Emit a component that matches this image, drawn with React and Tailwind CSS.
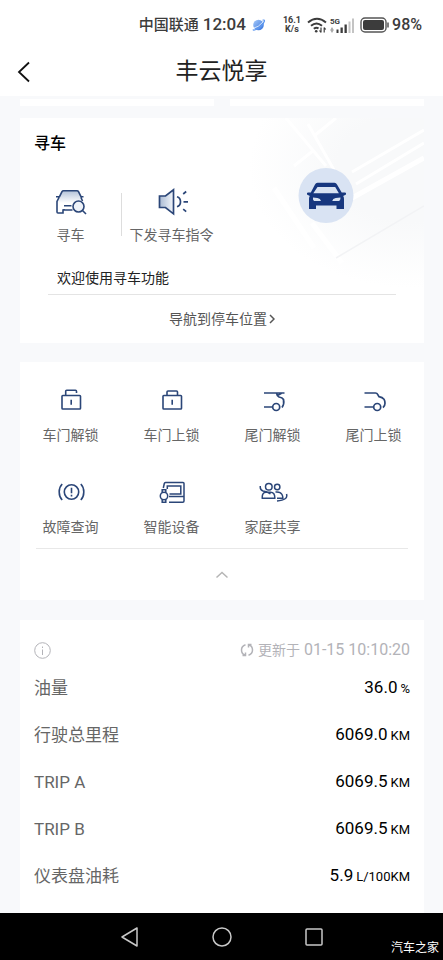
import React, { useState } from 'react';

const NAVY = '#2b4678';

function FindCarIcon() {
  return (
    <svg width="32" height="30" viewBox="0 0 32 30" fill="none" stroke={NAVY} strokeWidth="1.6">
      <defs>
        <linearGradient id="carFill" x1="0" y1="0" x2="0" y2="1">
          <stop offset="0" stopColor="#b4c3d9" />
          <stop offset="1" stopColor="#ffffff" />
        </linearGradient>
      </defs>
      <path d="M4 11 7.500 4h15.500l3.500 7 1 5H2.500z" fill="url(#carFill)" stroke="none" />
      <path d="M1 9.700h3.500L7 4.700q.5-1 1.500-1h13.500q1 0 1.500 1L26 9.700h2.500M4 10.500l-2 4V25q0 1 1 1h5v-3h9.500M26 10.500l1.500 3.500M9 18.700h7.500M9 23v-1" />
      <circle cx="23.500" cy="19.500" r="5.500" fill="#eef2f8" />
      <path d="m27.500 23.500 3.500 3.500" />
    </svg>
  );
}

function HornIcon() {
  return (
    <svg width="32" height="30" viewBox="0 0 32 30" fill="none" stroke={NAVY} strokeWidth="1.7">
      <defs>
        <linearGradient id="hornFill" x1="0" y1="0" x2="1" y2="0">
          <stop offset="0" stopColor="#a9bad3" />
          <stop offset="1" stopColor="#f4f7fb" />
        </linearGradient>
      </defs>
      <path d="M3.500 9H9.500L17.500 2.800v24L9.500 20.500h-6z" fill="url(#hornFill)" />
      <path d="M21 9.800q3.500 1 3.500 5t-3.500 5M27.200 7l3-2.500M27.500 14.800H32M27.200 22.200l3 2.500" />
    </svg>
  );
}

function LockIcon({ open }) {
  return (
    <svg width="28" height="28" viewBox="0 0 28 28" fill="none" stroke={NAVY} strokeWidth="1.600">
      <rect x="5" y="9.500" width="18.500" height="13.500" rx="0.800" />
      <path d={open ? 'M8.700 9.500V5.200q0-1 1-1h8.800q1 0 1 1V7' : 'M9 9.500V6q0-1 1-1h8.500q1 0 1 1v3.500'} />
      <path d="M14.200 13.800v5" />
    </svg>
  );
}

function TailgateIcon({ open }) {
  return (
    <svg width="28" height="28" viewBox="0 0 28 28" fill="none" stroke={NAVY} strokeWidth="1.700">
      {open ? (
        <path d="M5 7h20.500M17.500 7q.5 3 2.500 4 3.500.5 4.500 2.500 1 4.500-1.500 8M18.500 9.500l4-2.300M5 21h8" />
      ) : (
        <path d="M4.500 7h11q1.500 0 2 1.200l1.500 2.500q3.500.8 5 2.500 1 2 1 4 0 2.500-2 4.500M4.500 21h9" />
      )}
      <circle cx="17.200" cy="21" r="3.500" />
    </svg>
  );
}

function FaultIcon() {
  return (
    <svg width="28" height="28" viewBox="0 0 28 28" fill="none" stroke={NAVY} strokeWidth="1.600">
      <circle cx="14.500" cy="14" r="7.200" />
      <path d="M14.500 9.800v5.500M14.500 16.700v1.800M5.200 6Q2.200 9 2.200 14t3 8M23.800 6q3 3 3 8t-3 8" />
    </svg>
  );
}

function DeviceIcon() {
  return (
    <svg width="28" height="28" viewBox="0 0 28 28" fill="none" stroke={NAVY} strokeWidth="1.500">
      <path d="M5.300 10 6.300 5.500q.2-1 1.200-1h17.500q1 0 1 1v17.500q0 1.200-1.200 1.200H11M9.300 11V8h13.500v8H11.500M11 18.500h15" />
      <circle cx="6" cy="18" r="3.700" fill="#ffffff" />
      <path d="M4.200 14.500V11.800h3.600v2.700M4.200 21.500v2.700h3.600v-2.700" />
    </svg>
  );
}

function FamilyIcon() {
  return (
    <svg width="30" height="28" viewBox="0 0 30 28" fill="none" stroke={NAVY} strokeWidth="1.500">
      <circle cx="10.800" cy="8.800" r="3.300" />
      <circle cx="19.200" cy="9" r="2.700" />
      <path d="M4.300 20.300q-.5-6 3.700-6h4.500q4.500 0 4.300 6zM2.300 8q-.5 4 2.700 5 4.500.5 7.500 3M17.500 14q5-.5 6.500 2.500 1 2 .8 3.800H19M28.500 16q2 6-9.500 7" />
    </svg>
  );
}

function MapPreview() {
  return (
    <svg className="absolute right-0 top-0" width="180" height="172" viewBox="0 0 180 172" fill="none">
      <defs>
        <radialGradient id="mapFade" gradientUnits="userSpaceOnUse" cx="165" cy="50" r="160" gradientTransform="matrix(1 0 0 0.75 0 12)">
          <stop offset="0.45" stopColor="#f8f9fa" />
          <stop offset="1" stopColor="#f8f9fa" stopOpacity="0" />
        </radialGradient>
      </defs>
      <path d="M0 0h180v172H0z" fill="url(#mapFade)" />
      <g stroke="#ffffff">
        <path d="m42 0 40 48M50 48 70 32M70 18 92 0M64 6l26 46M180 12 108 54M180 25 112 66" strokeWidth="3" />
        <path d="M180 40 108 80M68 105l30 40M30 70l40 60" strokeWidth="5" />
      </g>
      <path d="M180 88 92 140" stroke="#f2f3f5" strokeWidth="1.500" />
      <circle cx="82" cy="77.500" r="27.500" fill="#d9e3f3" />
      <path
        fill="#17377f"
        fillRule="evenodd"
        d="M71 66.500q.8-1.700 2.500-1.700h17q1.700 0 2.500 1.700l4.700 8h3.300q1.500 0 1 2l-2.800 1.500q.8 1 .8 3V91h-7.500v-3.500H72V91h-7V81q0-2 .8-3L63 76.500q-.5-2 1-2h2.800zM73.500 69l-4.200 6.200h25.600L91.200 69zM69 79.500q-.5 2 1 3.500h7q-.5-2.500-3.500-3zM96.500 79.500l-4.800.5q-3 .5-3.500 3h7q1.500-1.500 1.300-3.500z"
      />
    </svg>
  );
}

function StatusBar() {
  return (
    <div className="flex h-[50px] items-center justify-end pr-[21px] text-[#3c3c3c]">
      <span className="text-[15px] font-medium">中国联通</span>
      <span className="ml-1 text-[17px] font-medium">12:04</span>
      <svg className="ml-1.5" width="14" height="14" viewBox="0 0 14 14">
        <defs>
          <linearGradient id="planet" x1="0" y1="0" x2="1" y2="1">
            <stop offset="0" stopColor="#a8cbfa" />
            <stop offset="1" stopColor="#2f6fdc" />
          </linearGradient>
        </defs>
        <circle cx="6.500" cy="7" r="5.300" fill="url(#planet)" />
        <path d="M1 11.500q.5 1.500 5-1T12.500 3q0-1.500-2-.8" fill="none" stroke="#5d97ef" strokeWidth="1.200" />
        <path d="M2 10q4-.5 9-6" fill="none" stroke="#d5e6fd" strokeWidth="1" />
      </svg>
      <span className="ml-[17px] text-center text-[9px] leading-[9px] font-bold">
        16.1
        <br />
        K/s
      </span>
      <svg className="ml-1.5" width="20" height="18" viewBox="0 0 20 18" fill="none" stroke="#3c3c3c" strokeWidth="2">
        <path d="M1 6.500q9-7.500 18 0M4 9.800q5.500-4.500 11 0M6.800 12.800q2.700-2 4.700-.3" />
        <circle cx="9.200" cy="15.200" r="1.300" fill="#3c3c3c" stroke="none" />
        <path d="M14 11.500v5M17.200 11.500v5M12.500 14.500l1.500 2M17.200 11.500l1.500 2" strokeWidth="1.200" />
      </svg>
      <span className="ml-[3px] flex items-end">
        <span className="-mr-2.5 self-start text-[8px] leading-[9px] font-bold">5G</span>
        <svg width="24" height="17" viewBox="0 0 24 17" fill="#3c3c3c">
          <path d="M6.500 12.500h2V16h-2zM10.500 10.500h2.300V16h-2.300zM14.500 7.500h2.300V16h-2.300z" />
          <path d="m2 10 1.800 3L2 16 .2 13z" fill="#aaaaaa" />
          <path d="M18.500 4.500h2V16h-2zM22 1.500h2V16h-2z" fill="#c4c4c4" />
        </svg>
      </span>
      <svg className="ml-1.5" width="30" height="16" viewBox="0 0 30 16" fill="none">
        <rect x="1" y="1" width="25" height="14" rx="4" stroke="#555555" strokeWidth="1.400" />
        <rect x="3" y="3" width="21" height="10" rx="2" fill="#3c3c3c" />
        <path d="M28 5.500v5" stroke="#555555" strokeWidth="1.500" />
      </svg>
      <span className="ml-0.5 text-[16px] font-medium">98%</span>
    </div>
  );
}

const ACTIONS = [
  { label: '车门解锁', icon: <LockIcon open /> },
  { label: '车门上锁', icon: <LockIcon /> },
  { label: '尾门解锁', icon: <TailgateIcon open /> },
  { label: '尾门上锁', icon: <TailgateIcon /> },
  { label: '故障查询', icon: <FaultIcon /> },
  { label: '智能设备', icon: <DeviceIcon /> },
  { label: '家庭共享', icon: <FamilyIcon /> },
];

const STATS = [
  { label: '油量', value: '36.0', unit: '%' },
  { label: '行驶总里程', value: '6069.0', unit: 'KM' },
  { label: 'TRIP A', value: '6069.5', unit: 'KM' },
  { label: 'TRIP B', value: '6069.5', unit: 'KM' },
  { label: '仪表盘油耗', value: '5.9', unit: 'L/100KM' },
];

export default function App() {
  const [expanded, setExpanded] = useState(true);
  const actions = expanded ? ACTIONS : ACTIONS.slice(0, 4);

  return (
    <div className="flex min-h-screen flex-col bg-[#f8f9fb] font-['Roboto','Noto_Sans_CJK_SC',sans-serif] text-black">
      <header className="bg-white">
        <StatusBar />
        <div className="grid h-[46px] grid-cols-[1fr_auto_1fr] items-center pb-0.5">
          <button aria-label="返回" className="ml-4 justify-self-start">
            <svg width="16" height="22" viewBox="0 0 16 22" fill="none" stroke="#111111" strokeWidth="1.800">
              <path d="M13 1.500 3 11l10 9.500" />
            </svg>
          </button>
          <h1 className="text-[23px] leading-8 text-[#222222]">丰云悦享</h1>
        </div>
      </header>

      <main className="flex-1 pt-[3px] pr-[19px] pl-5">
        <div className="mb-3 grid grid-cols-2 gap-4">
          <div className="h-[7px] bg-white" />
          <div className="h-[7px] bg-white" />
        </div>

        <section className="relative mb-[19px] bg-white pt-3.5 pb-3.5">
          <MapPreview />
          <h2 className="px-3.5 text-[16px] leading-6 font-medium">寻车</h2>
          <div className="mt-[31px] grid grid-cols-4">
            <button className="flex flex-col items-center gap-2">
              <FindCarIcon />
              <span className="text-[14px] leading-5 text-[#666666]">寻车</span>
            </button>
            <button className="relative flex flex-col items-center gap-2">
              <span className="absolute top-1.5 left-0 h-[43px] w-px bg-[#dddddd]" />
              <HornIcon />
              <span className="text-[14px] leading-5 whitespace-nowrap text-[#666666]">下发寻车指令</span>
            </button>
          </div>
          <p className="mx-7 mt-[23px] border-b border-[#e4e4e4] px-[9px] pb-1.5 text-[14px] leading-5 text-[#222222]">
            欢迎使用寻车功能
          </p>
          <a href="#navigate" className="mt-3.5 flex items-center justify-center text-[14px] leading-5 text-[#555555]">
            导航到停车位置
            <svg className="ml-0.5" width="6" height="10" viewBox="0 0 6 10" fill="none" stroke="#555555" strokeWidth="1.500">
              <path d="m1 1 4 4-4 4" />
            </svg>
          </a>
        </section>

        <section className="mb-5 bg-white pt-6">
          <div className="grid grid-cols-4 gap-y-[33px]">
            {actions.map((action) => (
              <button key={action.label} className="flex flex-col items-center gap-[11px]">
                {action.icon}
                <span className="text-[14px] leading-5 text-[#666666]">{action.label}</span>
              </button>
            ))}
          </div>
          <div className="mx-4 mt-[11px] border-t border-[#e8e8e8]">
            <button
              aria-label={expanded ? '收起' : '展开'}
              onClick={() => setExpanded(!expanded)}
              className="flex h-[51px] w-full items-center justify-center"
            >
              <svg
                className={expanded ? '' : 'rotate-180'}
                width="14"
                height="8"
                viewBox="0 0 14 8"
                fill="none"
                stroke="#b5b5b5"
                strokeWidth="1.500"
              >
                <path d="m1.500 6.500 5.500-5 5.500 5" />
              </svg>
            </button>
          </div>
        </section>

        <section className="bg-white px-3.5 pt-5 pb-3.5">
          <div className="mb-1 flex h-5 items-center justify-between text-[#b3b3b8]">
            <button aria-label="说明">
              <svg width="17" height="17" viewBox="0 0 17 17" fill="none" stroke="currentColor">
                <circle cx="8.500" cy="8.500" r="7.800" />
                <path d="M8.500 7.500V13M8.500 4.500V6" />
              </svg>
            </button>
            <button className="flex items-center text-[14px] leading-5">
              <svg className="mr-1" width="14" height="14" viewBox="0 0 14 14" fill="none" stroke="currentColor" strokeWidth="1.500">
                <path d="M5.500 1.800Q1.500 3 1.500 7t3.500 5M5.500 9.500V12.500H2.500M8.500 12.200q4-1.200 4-5.200T9 2M8.500 4.500v-3h3" />
              </svg>
              更新于
              <time className="ml-1 text-[16px]">01-15 10:10:20</time>
            </button>
          </div>
          <dl>
            {STATS.map((row) => (
              <div key={row.label} className="flex h-[47px] items-center justify-between">
                <dt className="text-[17px] leading-6 text-[#666666]">{row.label}</dt>
                <dd className="flex items-baseline gap-[3px] text-[17px] leading-6">
                  {row.value}
                  <span className="text-[13px]">{row.unit}</span>
                </dd>
              </div>
            ))}
          </dl>
        </section>
      </main>

      <nav className="relative flex h-[47px] items-center justify-center gap-[68px] bg-black text-[#c8c8c8]">
        <button aria-label="系统返回">
          <svg width="24" height="24" viewBox="0 0 24 24" fill="none" stroke="currentColor" strokeWidth="1.500" strokeLinejoin="round">
            <path d="M19 3v18L4 12z" />
          </svg>
        </button>
        <button aria-label="主屏幕">
          <svg width="24" height="24" viewBox="0 0 24 24" fill="none" stroke="currentColor" strokeWidth="1.500">
            <circle cx="12" cy="12" r="9" />
          </svg>
        </button>
        <button aria-label="最近任务">
          <svg width="24" height="24" viewBox="0 0 24 24" fill="none" stroke="currentColor" strokeWidth="1.500">
            <rect x="4" y="4" width="16" height="16" rx="1" />
          </svg>
        </button>
        <span className="absolute right-1 bottom-0.5 text-[12px] leading-5 text-white">汽车之家</span>
      </nav>
    </div>
  );
}
